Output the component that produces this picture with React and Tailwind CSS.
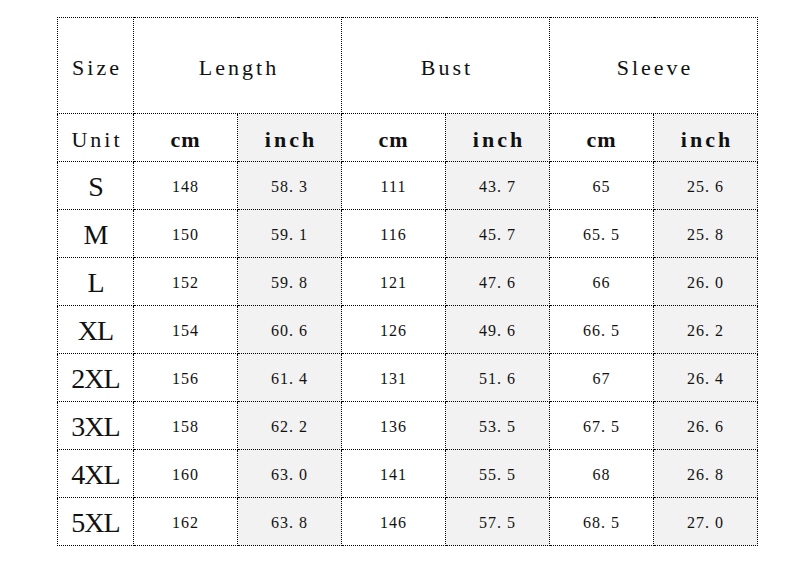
const rows = [
  ["S", "148", "58. 3", "111", "43. 7", "65", "25. 6"],
  ["M", "150", "59. 1", "116", "45. 7", "65. 5", "25. 8"],
  ["L", "152", "59. 8", "121", "47. 6", "66", "26. 0"],
  ["XL", "154", "60. 6", "126", "49. 6", "66. 5", "26. 2"],
  ["2XL", "156", "61. 4", "131", "51. 6", "67", "26. 4"],
  ["3XL", "158", "62. 2", "136", "53. 5", "67. 5", "26. 6"],
  ["4XL", "160", "63. 0", "141", "55. 5", "68", "26. 8"],
  ["5XL", "162", "63. 8", "146", "57. 5", "68. 5", "27. 0"],
];

const cell = "border border-dotted border-black text-center p-0";
const serif = { fontFamily: '"Liberation Serif", "DejaVu Serif", serif' };

export default function App() {
  return (
    <div className="w-[800px] h-[574px] bg-white pt-[17px] pl-[57px]">
      <table className="border-collapse text-[#111]" style={serif}>
        <colgroup>
          <col className="w-[76px]" />
          <col className="w-[104px]" />
          <col className="w-[104px]" />
          <col className="w-[104px]" />
          <col className="w-[104px]" />
          <col className="w-[104px]" />
          <col className="w-[104px]" />
        </colgroup>
        <tbody>
          <tr className="h-[96px] text-[22px] tracking-[3px]">
            <td className={cell + " pt-1 pl-[3px]"}>Size</td>
            <td className={cell + " pt-1 pl-[3px]"} colSpan={2}>Length</td>
            <td className={cell + " pt-1 pl-[3px]"} colSpan={2}>Bust</td>
            <td className={cell + " pt-1 pl-[3px]"} colSpan={2}>Sleeve</td>
          </tr>
          <tr className="h-[48px]">
            <td className={cell + " pt-1 text-[22px] tracking-[3px] pl-[3px]"}>Unit</td>
            {[0, 1, 2].map((i) => [
              <td key={"c" + i} className={cell + " pt-1 text-[22px] font-bold tracking-[1px]"}>cm</td>,
              <td key={"i" + i} className={cell + " pt-1 text-[22px] font-bold tracking-[3px] pl-[3px] bg-[#f2f2f2]"}>inch</td>,
            ])}
          </tr>
          {rows.map((r) => (
            <tr key={r[0]} className="h-[48px]">
              <td className={cell + " pt-[3px] text-[28px] tracking-[-1px]"}>{r[0]}</td>
              {r.slice(1).map((v, j) => (
                <td
                  key={j}
                  className={cell + " pt-[3px] text-[16px] tracking-[1px] " + (j % 2 === 1 ? "bg-[#f2f2f2]" : "bg-white")}
                >
                  {v}
                </td>
              ))}
            </tr>
          ))}
        </tbody>
      </table>
    </div>
  );
}
